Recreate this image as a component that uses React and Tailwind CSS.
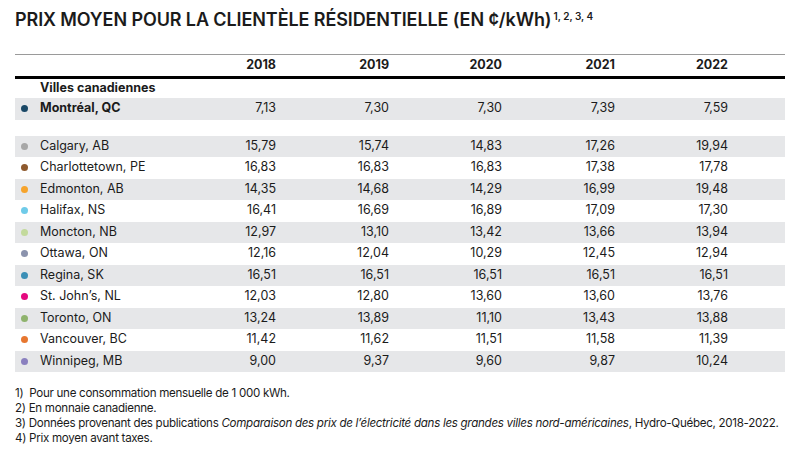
const years = ["2018", "2019", "2020", "2021", "2022"];

const villes = [
  { nom: "Calgary, AB", c: "bg-[#a7a7a7]", v: ["15,79", "15,74", "14,83", "17,26", "19,94"] },
  { nom: "Charlottetown, PE", c: "bg-[#8e5a2e]", v: ["16,83", "16,83", "16,83", "17,38", "17,78"] },
  { nom: "Edmonton, AB", c: "bg-[#f6a42c]", v: ["14,35", "14,68", "14,29", "16,99", "19,48"] },
  { nom: "Halifax, NS", c: "bg-[#6fcbe9]", v: ["16,41", "16,69", "16,89", "17,09", "17,30"] },
  { nom: "Moncton, NB", c: "bg-[#c3da9c]", v: ["12,97", "13,10", "13,42", "13,66", "13,94"] },
  { nom: "Ottawa, ON", c: "bg-[#8b93ad]", v: ["12,16", "12,04", "10,29", "12,45", "12,94"] },
  { nom: "Regina, SK", c: "bg-[#3b8fb6]", v: ["16,51", "16,51", "16,51", "16,51", "16,51"] },
  { nom: "St. John’s, NL", c: "bg-[#e5097f]", v: ["12,03", "12,80", "13,60", "13,60", "13,76"] },
  { nom: "Toronto, ON", c: "bg-[#8fb36d]", v: ["13,24", "13,89", "11,10", "13,43", "13,88"] },
  { nom: "Vancouver, BC", c: "bg-[#e77730]", v: ["11,42", "11,62", "11,51", "11,58", "11,39"] },
  { nom: "Winnipeg, MB", c: "bg-[#8a80bf]", v: ["9,00", "9,37", "9,60", "9,87", "10,24"] },
];

const grid = "grid grid-cols-[190px_repeat(5,113px)_1fr] items-center";

function Row({ nom, c, v, gray, bold }) {
  return (
    <div className={`${grid} h-[21.5px] ${gray ? "bg-[#e6e7e9]" : ""}`}>
      <div className="flex items-center">
        <span className={`w-[7px] h-[7px] rounded-full ml-[6px] mr-[12px] ${c}`}></span>
        <span className={bold ? "font-bold" : ""}>{nom}</span>
      </div>
      {v.map((x, i) => (
        <div key={i} className="text-right pr-[42px]">{x}</div>
      ))}
      <div></div>
    </div>
  );
}

export default function App() {
  return (
    <div className="w-[800px] h-[450px] bg-white text-[#1b1b1b] px-[15px] pt-[8px] font-['Inter',sans-serif] text-[12.5px] overflow-hidden">
      <h1 className="text-[18px] leading-[24px] font-semibold tracking-[-0.1px] flex items-start">
        <span>PRIX MOYEN POUR LA CLIENTÈLE RÉSIDENTIELLE (EN ¢/kWh)</span>
        <span className="text-[10px] leading-[10px] ml-[2px] mt-[3px] tracking-normal">1, 2, 3, 4</span>
      </h1>

      <div className="mt-[22px] border-t border-[#9a9a9a]">
        <div className={`${grid} h-[21px] font-bold`}>
          <div></div>
          {years.map((y) => (
            <div key={y} className="text-right pr-[42px]">{y}</div>
          ))}
          <div></div>
        </div>
        <div className="h-[3px] bg-black"></div>
        <div className="h-[19px] flex items-center pl-[25px] font-bold">Villes canadiennes</div>
        <Row nom="Montréal, QC" c="bg-[#1a4866]" v={["7,13", "7,30", "7,30", "7,39", "7,59"]} gray bold />
        <div className="h-[16px]"></div>
        {villes.map((r, i) => (
          <Row key={r.nom} {...r} gray={i % 2 === 0} />
        ))}
      </div>

      <div className="mt-[14px] leading-[15px] text-[11.6px] tracking-[-0.3px] whitespace-nowrap">
        <p>1)&nbsp; Pour une consommation mensuelle de 1 000 kWh.</p>
        <p>2) En monnaie canadienne.</p>
        <p>
          3) Données provenant des publications{" "}
          <i>Comparaison des prix de l’électricité dans les grandes villes nord-américaines</i>, Hydro-Québec, 2018-2022.
        </p>
        <p>4) Prix moyen avant taxes.</p>
      </div>
    </div>
  );
}
